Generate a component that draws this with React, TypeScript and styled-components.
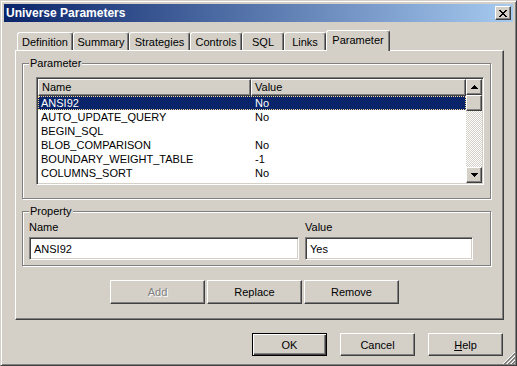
import React, { useState } from 'react';
import styled, { createGlobalStyle, css } from 'styled-components';

const face = '#d4d0c8';
const shadow = '#808080';
const darkShadow = '#404040';
const highlight = '#ffffff';
const navy = '#0a246a';

const GlobalStyle = createGlobalStyle`
  html, body {
    margin: 0;
    padding: 0;
    background: ${face};
  }
  body {
    font-family: "Liberation Sans", Arial, sans-serif;
    font-size: 11px;
    color: #000;
  }
  *, *::before, *::after {
    box-sizing: border-box;
  }
`;

const raised = css`
  border: 1px solid;
  border-color: ${highlight} ${darkShadow} ${darkShadow} ${highlight};
  box-shadow: inset -1px -1px ${shadow}, inset 1px 1px ${face};
`;

const sunken = css`
  border: 1px solid;
  border-color: ${shadow} ${highlight} ${highlight} ${shadow};
  box-shadow: inset 1px 1px ${darkShadow}, inset -1px -1px ${face};
`;

interface Param {
  name: string;
  value: string;
}

const params: Param[] = [
  { name: 'ANSI92', value: 'No' },
  { name: 'AUTO_UPDATE_QUERY', value: 'No' },
  { name: 'BEGIN_SQL', value: '' },
  { name: 'BLOB_COMPARISON', value: 'No' },
  { name: 'BOUNDARY_WEIGHT_TABLE', value: '-1' },
  { name: 'COLUMNS_SORT', value: 'No' },
];

const tabs = [
  { label: 'Definition', width: 56 },
  { label: 'Summary', width: 56 },
  { label: 'Strategies', width: 61 },
  { label: 'Controls', width: 52 },
  { label: 'SQL', width: 42 },
  { label: 'Links', width: 42 },
  { label: 'Parameter', width: 64 },
];

const CloseGlyph = () => (
  <svg width="8" height="7" viewBox="0 0 8 7" shapeRendering="crispEdges">
    <path
      fill="#000"
      d="M0 0h2v1H0z M6 0h2v1H6z M1 1h2v1H1z M5 1h2v1H5z M2 2h4v1H2z M3 3h2v1H3z M2 4h4v1H2z M1 5h2v1H1z M5 5h2v1H5z M0 6h2v1H0z M6 6h2v1H6z"
    />
  </svg>
);

const Arrow = ({ down }: { down?: boolean }) => (
  <svg width="7" height="4" viewBox="0 0 7 4" shapeRendering="crispEdges">
    <path
      fill="#000"
      d={
        down
          ? 'M0 0h7v1H0z M1 1h5v1H1z M2 2h3v1H2z M3 3h1v1H3z'
          : 'M3 0h1v1H3z M2 1h3v1H2z M1 2h5v1H1z M0 3h7v1H0z'
      }
    />
  </svg>
);

const SizeGrip = () => (
  <GripBox>
    <svg width="12" height="12" viewBox="0 0 12 12">
      {[0, 4, 8].map((o) => (
        <g key={o}>
          <line x1={o} y1={12} x2={12} y2={o} stroke={highlight} />
          <line x1={o + 1} y1={12} x2={12} y2={o + 1} stroke={shadow} />
          <line x1={o + 2} y1={12} x2={12} y2={o + 2} stroke={shadow} />
        </g>
      ))}
    </svg>
  </GripBox>
);

const App: React.FC = () => {
  const [selected, setSelected] = useState(0);
  const [name, setName] = useState('ANSI92');
  const [value, setValue] = useState('Yes');

  const handleSelect = (index: number) => {
    setSelected(index);
    setName(params[index].name);
    setValue(params[index].value);
  };

  return (
    <>
      <GlobalStyle />
      <Window>
        <TitleBar>
          <span>Universe Parameters</span>
          <CloseButton>
            <CloseGlyph />
          </CloseButton>
        </TitleBar>

        <TabStrip>
          {tabs.map((tab) => (
            <Tab key={tab.label} $w={tab.width} $active={tab.label === 'Parameter'}>
              {tab.label}
            </Tab>
          ))}
        </TabStrip>

        <Panel>
          <GroupBox $h={136}>
            <Legend>Parameter</Legend>
            <ListView>
              <ListBody>
                <HeaderRow>
                  <HeaderCell>Name</HeaderCell>
                  <HeaderCell>Value</HeaderCell>
                </HeaderRow>
                {params.map((p, i) => (
                  <Row key={p.name} $selected={i === selected} onClick={() => handleSelect(i)}>
                    <Cell>{p.name}</Cell>
                    <Cell>{p.value}</Cell>
                  </Row>
                ))}
              </ListBody>
              <ScrollBar>
                <ScrollButton>
                  <Arrow />
                </ScrollButton>
                <Thumb />
                <Track />
                <ScrollButton>
                  <Arrow down />
                </ScrollButton>
              </ScrollBar>
            </ListView>
          </GroupBox>

          <GroupBox $h={55} $gap={12}>
            <Legend>Property</Legend>
            <FieldRow>
              <Field $w={270}>
                <FieldLabel>Name</FieldLabel>
                <TextInput value={name} onChange={(e) => setName(e.target.value)} />
              </Field>
              <Field $w={168}>
                <FieldLabel>Value</FieldLabel>
                <TextInput value={value} onChange={(e) => setValue(e.target.value)} />
              </Field>
            </FieldRow>
          </GroupBox>

          <ButtonRow>
            <PushButton $w={95} $h={24} disabled>
              Add
            </PushButton>
            <PushButton $w={95} $h={24}>Replace</PushButton>
            <PushButton $w={95} $h={24}>Remove</PushButton>
          </ButtonRow>
        </Panel>

        <Footer>
          <PushButton $w={75} $h={23} $default>
            OK
          </PushButton>
          <PushButton $w={75} $h={23}>Cancel</PushButton>
          <PushButton $w={75} $h={23}>
            <u>H</u>elp
          </PushButton>
        </Footer>

        <SizeGrip />
      </Window>
    </>
  );
};

const Window = styled.div`
  position: relative;
  width: 517px;
  height: 366px;
  background: ${face};
  border: 1px solid;
  border-color: ${face} ${darkShadow} ${darkShadow} ${face};
  box-shadow: inset 1px 1px ${highlight}, inset -1px -1px ${shadow};
  padding: 3px;
  display: flex;
  flex-direction: column;
  font-family: "Liberation Sans", Arial, sans-serif;
  font-size: 11px;
`;

const TitleBar = styled.div`
  height: 18px;
  padding: 0 2px;
  display: flex;
  align-items: center;
  justify-content: space-between;
  background: linear-gradient(to right, ${navy}, #a6caf0);
  color: #fff;
  font-weight: bold;
  font-size: 12px;
`;

const CloseButton = styled.div`
  width: 16px;
  height: 14px;
  background: ${face};
  ${raised};
  display: flex;
  align-items: center;
  justify-content: center;
  padding-top: 1px;
`;

const TabStrip = styled.div`
  display: flex;
  align-items: flex-end;
  height: 20px;
  margin: 8px 0 0 11px;
  padding-left: 2px;
`;

const Tab = styled.div<{ $w: number; $active?: boolean }>`
  position: relative;
  width: ${(p) => p.$w}px;
  height: ${(p) => (p.$active ? 21 : 18)}px;
  margin-bottom: ${(p) => (p.$active ? -1 : 0)}px;
  padding-bottom: ${(p) => (p.$active ? 2 : 0)}px;
  z-index: ${(p) => (p.$active ? 1 : 0)};
  background: ${face};
  border-top: 1px solid ${highlight};
  border-left: 1px solid ${highlight};
  border-right: 1px solid ${darkShadow};
  box-shadow: inset -1px 0 ${shadow};
  border-radius: 3px 3px 0 0;
  display: flex;
  align-items: center;
  justify-content: center;
  white-space: nowrap;
`;

const Panel = styled.div`
  width: 489px;
  height: 270px;
  margin-left: 11px;
  border: 1px solid;
  border-color: ${highlight} ${darkShadow} ${darkShadow} ${highlight};
  box-shadow: inset -1px -1px ${shadow};
  padding: 12px 0 0 6px;
  display: flex;
  flex-direction: column;
`;

const GroupBox = styled.div<{ $h: number; $gap?: number }>`
  width: 469px;
  height: ${(p) => p.$h}px;
  margin-top: ${(p) => p.$gap ?? 0}px;
  flex-shrink: 0;
  border: 1px solid ${shadow};
  box-shadow: inset 1px 1px ${highlight}, 1px 1px ${highlight};
  display: flex;
  flex-direction: column;
`;

const Legend = styled.span`
  align-self: flex-start;
  margin: -7px 0 0 6px;
  padding: 0 1px;
  height: 13px;
  line-height: 13px;
  background: ${face};
`;

const ListView = styled.div`
  width: 448px;
  height: 108px;
  margin: 7px 0 0 13px;
  background: #fff;
  ${sunken};
  padding: 1px;
  display: flex;
`;

const ListBody = styled.div`
  flex: 1;
  display: flex;
  flex-direction: column;
  overflow: hidden;
`;

const HeaderRow = styled.div`
  display: grid;
  grid-template-columns: 213px 215px;
  height: 17px;
  flex-shrink: 0;
`;

const HeaderCell = styled.div`
  background: ${face};
  border: 1px solid;
  border-color: ${highlight} ${darkShadow} ${darkShadow} ${highlight};
  box-shadow: inset -1px -1px ${shadow};
  padding-left: 3px;
  line-height: 14px;
  white-space: nowrap;
`;

const Row = styled.div<{ $selected?: boolean }>`
  display: grid;
  grid-template-columns: 214px 214px;
  height: 14px;
  line-height: 14px;
  background: ${(p) => (p.$selected ? navy : 'transparent')};
  color: ${(p) => (p.$selected ? '#fff' : '#000')};
  outline: ${(p) => (p.$selected ? '1px dotted #f5db95' : 'none')};
  outline-offset: -1px;
  cursor: default;
`;

const Cell = styled.div`
  padding-left: 3px;
  white-space: nowrap;
  overflow: hidden;
`;

const ScrollBar = styled.div`
  width: 16px;
  display: flex;
  flex-direction: column;
`;

const ScrollButton = styled.div`
  width: 16px;
  height: 16px;
  flex-shrink: 0;
  background: ${face};
  ${raised};
  display: flex;
  align-items: center;
  justify-content: center;
`;

const Thumb = styled.div`
  width: 16px;
  height: 16px;
  flex-shrink: 0;
  background: ${face};
  ${raised};
`;

const Track = styled.div`
  flex: 1;
  background: repeating-conic-gradient(${highlight} 0 25%, ${face} 0 50%) 0 0 / 2px 2px;
`;

const FieldRow = styled.div`
  display: flex;
  gap: 6px;
  margin: 3px 0 0 6px;
`;

const Field = styled.div<{ $w: number }>`
  width: ${(p) => p.$w}px;
  display: flex;
  flex-direction: column;
`;

const FieldLabel = styled.label`
  height: 13px;
  line-height: 13px;
  margin-bottom: 3px;
`;

const TextInput = styled.input`
  width: 100%;
  height: 23px;
  margin: 0;
  padding: 0 4px;
  background: #fff;
  ${sunken};
  font-family: "Liberation Sans", Arial, sans-serif;
  font-size: 11px;
  color: #000;
  outline: none;
`;

const ButtonRow = styled.div`
  display: flex;
  gap: 2px;
  margin: 14px 0 0 88px;
`;

const PushButton = styled.button<{ $w: number; $h: number; $default?: boolean }>`
  width: ${(p) => p.$w}px;
  height: ${(p) => p.$h}px;
  margin: 0;
  padding: 0;
  background: ${face};
  font-family: "Liberation Sans", Arial, sans-serif;
  font-size: 11px;
  color: #000;
  ${(p) =>
    p.$default
      ? css`
          border: 1px solid #000;
          box-shadow: inset 1px 1px ${highlight}, inset -1px -1px ${darkShadow}, inset -2px -2px ${shadow};
        `
      : raised};

  &:disabled {
    color: ${shadow};
    text-shadow: 1px 1px ${highlight};
  }

  u {
    text-underline-offset: 1px;
  }
`;

const Footer = styled.div`
  display: flex;
  justify-content: flex-end;
  gap: 13px;
  margin-top: 13px;
  padding-right: 10px;
`;

const GripBox = styled.div`
  position: absolute;
  right: 1px;
  bottom: 1px;
  width: 12px;
  height: 12px;
  display: flex;
`;

export default App;
